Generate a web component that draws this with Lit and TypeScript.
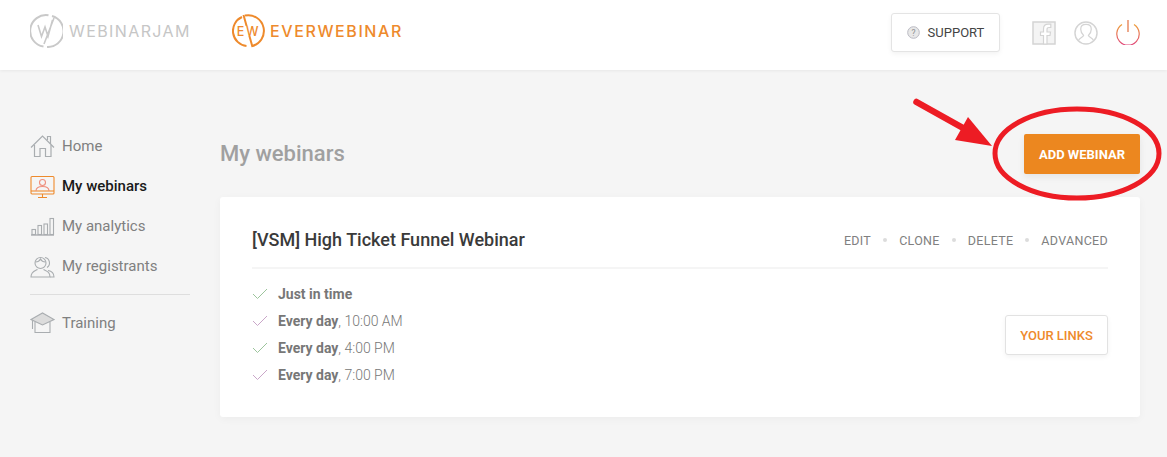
import { css, html, LitElement, svg } from "lit";
import { customElement } from "lit/decorators.js";

const navIcons = {
  home: svg`<g fill="none" stroke="#a9adb0" stroke-width="1.2"><path d="M1 13.500 12.500 2 24 13.500"/><path d="M17.500 6V2.500h3V10"/><path d="M4.500 11v11.500h5.500V14.500h5.500v8h5.500V11"/></g>`,
  webinars: svg`<g fill="none" stroke="#ee8a2c" stroke-width="1.1"><rect x="1" y="2.500" width="23" height="17.500" rx="1"/><path d="M1 17h23"/><path d="M12.500 20v3M8 23.500h9"/><circle cx="12.500" cy="8.500" r="3" stroke="#ef8f7d"/><path d="M6 17c0-3.500 3-4.500 6.500-4.500S19 13.500 19 17" stroke="#ef8f7d"/></g>`,
  analytics: svg`<g fill="none" stroke="#a9adb0" stroke-width="1.1"><path d="M1 21h23" stroke-width="1.400"/><rect x="2" y="15.500" width="3.500" height="5"/><rect x="8" y="11.500" width="3.500" height="9"/><rect x="14" y="10" width="3.500" height="10.500"/><rect x="20" y="4.500" width="3.500" height="16"/></g>`,
  registrants: svg`<g fill="none" stroke="#a9adb0" stroke-width="1.1"><circle cx="10.500" cy="9" r="5.500"/><path d="M5.500 8c2 0 4-1 5-3 1 2 3 3 5 3"/><path d="M7.500 15.500c-2.500 1.500-6.500 2-6.500 7.500h19c0-5.500-3.500-6-6.500-7.500"/><path d="M15 3.500a5.500 5.500 0 0 1 2 10M18 16.500c3 .5 6 2 6 6.500h-4"/></g>`,
  training: svg`<g fill="none" stroke="#a9adb0" stroke-width="1.1"><path d="M1 9.500 12.500 3 24 9.500 12.500 15z" fill="#dcdcdc"/><path d="M5 12v10.500h15V12M2.500 10.500V19"/></g>`,
};

const check = (colour: string) =>
  html`<svg class="check" width="16" height="12" viewBox="0 0 16 12"><path d="M1 6l4.500 4.500L15 1" fill="none" stroke=${colour} stroke-width="1"/></svg>`;

@customElement("app-root")
export class AppRoot extends LitElement {
  static styles = css`
    :host {
      display: block;
      position: relative;
      min-height: 457px;
      overflow: hidden;
      background: #f5f5f5;
      font-family: Roboto, sans-serif;
      color: #7d7d7d;
    }
    header {
      height: 70px;
      box-sizing: border-box;
      padding: 0 27px 5px 30px;
      background: #fff;
      box-shadow: 0 1px 3px rgba(0, 0, 0, 0.06);
      display: flex;
      align-items: center;
    }
    .logo {
      display: flex;
      align-items: center;
      font-family: Inter, sans-serif;
      font-size: 16px;
      white-space: nowrap;
      margin-bottom: 3px;
    }
    .logo.jam {
      color: #c6c6c6;
      gap: 6px;
      letter-spacing: 1.4px;
      width: 202px;
    }
    .logo.ever {
      color: #ee8a2c;
      gap: 5px;
      font-weight: 500;
      letter-spacing: 1.6px;
    }
    .spacer {
      flex: 1;
    }
    .support {
      width: 109px;
      height: 39px;
      box-sizing: border-box;
      margin-right: 32px;
      display: flex;
      align-items: center;
      justify-content: center;
      gap: 8px;
      background: #fff;
      border: 1px solid #e4e4e4;
      border-radius: 3px;
      box-shadow: 0 2px 5px rgba(0, 0, 0, 0.05);
      font-size: 13px;
      color: #444;
    }
    .top-icons {
      display: flex;
      align-items: center;
      gap: 18px;
    }
    .page {
      display: flex;
      padding: 56px 27px 0 30px;
    }
    nav {
      width: 160px;
      margin-right: 30px;
    }
    .item {
      height: 40px;
      display: flex;
      align-items: center;
      gap: 7px;
      font-size: 15px;
      color: #808080;
    }
    .item.active {
      color: #1a1a1a;
      font-weight: 500;
    }
    nav hr {
      height: 1px;
      border: 0;
      margin: 8px 0 7px;
      background: #dedede;
    }
    nav .train {
      height: 41px;
    }
    main {
      flex: 1;
    }
    .top {
      height: 71px;
      display: flex;
      align-items: flex-start;
      justify-content: space-between;
    }
    h1 {
      margin: 14px 0 0;
      font-size: 22px;
      line-height: 28px;
      font-weight: 500;
      color: #a0a0a0;
    }
    .add {
      margin-top: 8px;
      width: 116px;
      height: 40px;
      display: flex;
      align-items: center;
      justify-content: center;
      border-radius: 2px;
      background: #ec871f;
      box-shadow: 0 3px 7px rgba(0, 0, 0, 0.07);
      color: #fff;
      font-size: 13px;
      font-weight: 700;
    }
    .card {
      height: 220px;
      box-sizing: border-box;
      padding: 0 32px;
      background: #fff;
      border-radius: 3px;
      box-shadow: 0 2px 8px rgba(0, 0, 0, 0.04);
    }
    .card-head {
      height: 72px;
      box-sizing: border-box;
      padding-top: 15px;
      border-bottom: 2px solid #f5f5f5;
      display: flex;
      align-items: center;
      justify-content: space-between;
    }
    h2 {
      margin: 0;
      font-size: 18px;
      font-weight: 500;
      color: #3a3a3a;
    }
    .actions {
      display: flex;
      align-items: center;
      gap: 12px;
      margin-top: 1px;
      font-size: 12.500px;
      letter-spacing: 0.3px;
      color: #808080;
    }
    .actions i {
      width: 4px;
      height: 4px;
      border-radius: 50%;
      background: #dcdcdc;
    }
    .card-body {
      display: flex;
      align-items: center;
      justify-content: space-between;
    }
    ul {
      list-style: none;
      margin: 11px 0 0;
      padding: 0;
    }
    li {
      height: 27px;
      display: flex;
      align-items: center;
      gap: 10px;
      font-size: 14px;
      font-weight: 300;
      color: #777;
    }
    li b {
      font-weight: 700;
      color: #777;
    }
    .links {
      width: 103px;
      height: 40px;
      margin-top: 13px;
      box-sizing: border-box;
      display: flex;
      align-items: center;
      justify-content: center;
      background: #fff;
      border: 1px solid #e2e2e2;
      border-radius: 3px;
      box-shadow: 0 2px 5px rgba(0, 0, 0, 0.05);
      color: #ee8a2c;
      font-size: 13px;
      font-weight: 500;
    }
    .mark {
      position: absolute;
      left: 0;
      top: 0;
      pointer-events: none;
    }
  `;

  private navItem(icon: keyof typeof navIcons, label: string, cls = "") {
    return html`<div class="item ${cls}">
      <svg width="25" height="25" viewBox="0 0 25 25">${navIcons[icon]}</svg>
      <span>${label}</span>
    </div>`;
  }

  render() {
    return html`
      <header>
        <div class="logo jam">
          <svg width="33" height="34" viewBox="0 0 33 34">
            <g fill="none" stroke="#c9c9c9">
              <path d="M13.500 32.600A15.800 15.800 0 0 1 18.500 1.300M22 2A15.800 15.800 0 0 1 17 33" stroke-width="2"/>
              <path d="M8 11l3.500 11.500L15 13l3 9.500L22.500 6M14 30 24 4" stroke-width="1.600"/>
            </g>
          </svg>
          <span>WEBINARJAM</span>
        </div>
        <div class="logo ever">
          <svg width="33" height="34" viewBox="0 0 33 34">
            <path d="M14.500 32A15.200 15.200 0 0 1 10 3M13 1.600A15.200 15.200 0 0 1 19.500 32.200M11.500 1 20.500 33" fill="none" stroke="#ee8a2c" stroke-width="2"/>
            <rect x="6" y="12" width="21" height="10" fill="#fff"/>
            <text x="16.500" y="21.800" text-anchor="middle" font-family="Inter, sans-serif" font-size="12.500" font-weight="500" fill="#ee8a2c">EW</text>
          </svg>
          <span>EVERWEBINAR</span>
        </div>
        <div class="spacer"></div>
        <div class="support">
          <svg width="13" height="13" viewBox="0 0 13 13">
            <circle cx="6.500" cy="6.500" r="5.800" fill="#e8e8e8" stroke="#b9b9c2"/>
            <text x="6.500" y="9.500" text-anchor="middle" font-size="8.500" fill="#8f8f8f" font-family="Roboto, sans-serif">?</text>
          </svg>
          <span>SUPPORT</span>
        </div>
        <div class="top-icons">
          <svg width="24" height="24" viewBox="0 0 24 24">
            <rect x="1" y="1" width="22" height="22" fill="#f4f4f4" stroke="#d4d4d4" stroke-width="1.500"/>
            <path d="M15 23v-8.500h3l.5-3.500H15V8.500c0-1.500.7-2 2-2h1.800V3.200h-2.500c-3 0-4.800 1.800-4.800 4.800v3H8.500v3.500h3V23z" fill="#fff" stroke="#d4d4d4" stroke-width="1.200"/>
          </svg>
          <svg width="24" height="24" viewBox="0 0 25 25">
            <circle cx="12.500" cy="12.500" r="11.500" fill="none" stroke="#d4d4d4" stroke-width="1.500"/>
            <path d="M4.500 20.500c1-3 5-3.500 5.500-5.500-2-2-3-4-3-6.500 0-3 2-5 5.500-5s5.500 2 5.500 5c0 2.500-1 4.500-3 6.500.5 2 4.500 2.500 5.500 5.500" fill="none" stroke="#d4d4d4" stroke-width="1.300"/>
          </svg>
          <svg width="24" height="25" viewBox="0 0 24 25">
            <defs>
              <linearGradient id="pw" x1="0" y1="0" x2="0" y2="1">
                <stop offset="0" stop-color="#eea03c"/>
                <stop offset="1" stop-color="#e0457a"/>
              </linearGradient>
            </defs>
            <path d="M6 4.500a11.200 11.200 0 1 0 12 0" fill="none" stroke="url(#pw)" stroke-width="1.200"/>
            <path d="M12 0v12" stroke="#e2703f" stroke-width="1.200"/>
          </svg>
        </div>
      </header>
      <div class="page">
        <nav>
          ${this.navItem("home", "Home")}
          ${this.navItem("webinars", "My webinars", "active")}
          ${this.navItem("analytics", "My analytics")}
          ${this.navItem("registrants", "My registrants")}
          <hr />
          ${this.navItem("training", "Training", "train")}
        </nav>
        <main>
          <div class="top">
            <h1>My webinars</h1>
            <div class="add">ADD WEBINAR</div>
          </div>
          <section class="card">
            <div class="card-head">
              <h2>[VSM] High Ticket Funnel Webinar</h2>
              <div class="actions">
                <span>EDIT</span><i></i><span>CLONE</span><i></i><span>DELETE</span><i></i><span>ADVANCED</span>
              </div>
            </div>
            <div class="card-body">
              <ul>
                <li>${check("#9cc49c")}<span><b>Just in time</b></span></li>
                <li>${check("#c9a6c8")}<span><b>Every day</b>, 10:00 AM</span></li>
                <li>${check("#9cc49c")}<span><b>Every day</b>, 4:00 PM</span></li>
                <li>${check("#c9a6c8")}<span><b>Every day</b>, 7:00 PM</span></li>
              </ul>
              <div class="links">YOUR LINKS</div>
            </div>
          </section>
        </main>
      </div>
      <svg class="mark" width="1167" height="457" viewBox="0 0 1167 457">
        <ellipse cx="1077" cy="153.500" rx="82" ry="44.500" fill="none" stroke="#ed1c24" stroke-width="5"/>
        <path d="M916.500 102 972 133" stroke="#ed1c24" stroke-width="6.500" stroke-linecap="round"/>
        <path d="M992 146 968 117 955 140z" fill="#ed1c24"/>
      </svg>
    `;
  }
}
